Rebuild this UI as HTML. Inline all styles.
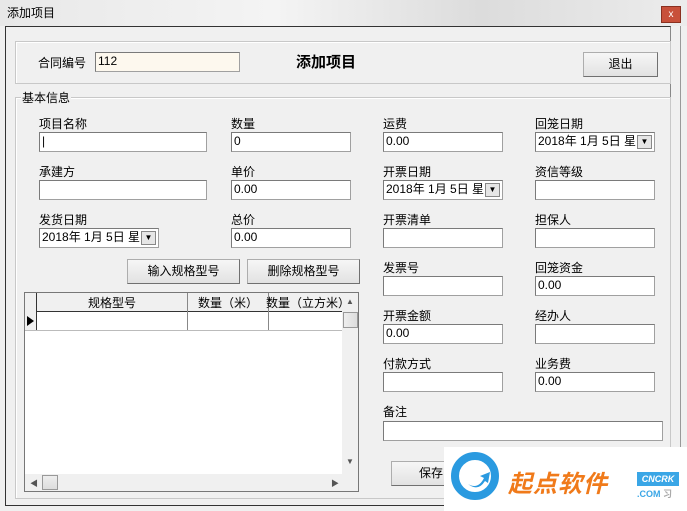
<!DOCTYPE html><html><head><meta charset="utf-8"><style>
*{box-sizing:border-box;margin:0;padding:0}
body{width:687px;height:511px;overflow:hidden;background:#f0f0f0;position:relative;font-family:"Liberation Sans","Noto Sans CJK SC",sans-serif;font-size:12px;color:#000}
.a{position:absolute}
.lbl{position:absolute;font-size:12px;line-height:14px}
.in{position:absolute;height:20px;background:#fff;border:1px solid #a0a0a0;border-top-color:#7a7a7a;border-left-color:#7a7a7a;font-size:12px;line-height:17px;padding-left:2px}
.btn{position:absolute;background:linear-gradient(#f6f6f6,#e2e2e2);border:1px solid #adadad;border-right-color:#707070;border-bottom-color:#707070;text-align:center;font-size:12px}
.grp{position:absolute;border:1px solid #c8c8c8;box-shadow:inset 1px 1px 0 #fff}
.dd{position:absolute;top:2px;right:2px;width:15px;height:14px;background:#e6e6e6;border:1px solid #888;font-size:8px;text-align:center;line-height:12px}
</style></head><body>
<div class="a" style="left:0;top:0;width:687px;height:26px;background:linear-gradient(90deg,#e8e8e8,#f4f4f4 40%,#dcdcdc 70%,#ececec)"></div>
<div class="lbl" style="left:7px;top:6px">添加项目</div>
<div class="a" style="left:661px;top:6px;width:20px;height:17px;background:#c8503a;border:1px solid #8a3020;color:#fff;font-size:10px;text-align:center;line-height:15px">x</div>
<div class="a" style="left:5px;top:26px;width:666px;height:480px;border:1px solid #333;border-right:1px solid #888"></div>
<div class="a" style="left:680px;top:26px;width:1px;height:480px;background:#999"></div>
<div class="grp" style="left:15px;top:41px;width:656px;height:43px"></div>
<div class="lbl" style="left:38px;top:56px">合同编号</div>
<div class="in" style="left:95px;top:52px;width:145px;background:#fdf8ee">112</div>
<div class="a" style="left:296px;top:51px;font-size:15px;font-weight:bold">添加项目</div>
<div class="btn" style="left:583px;top:52px;width:75px;height:25px;line-height:23px">退出</div>
<div class="grp" style="left:15px;top:97px;width:656px;height:402px"></div>
<div class="lbl" style="left:21px;top:91px;background:#f0f0f0;padding:0 1px">基本信息</div>

<div class="lbl" style="left:39px;top:117px">项目名称</div><div class="in" style="left:39px;top:132px;width:168px">|</div>
<div class="lbl" style="left:39px;top:165px">承建方</div><div class="in" style="left:39px;top:180px;width:168px"></div>
<div class="lbl" style="left:39px;top:213px">发货日期</div><div class="in" style="left:39px;top:228px;width:120px">2018年  1月  5日 星<div class="dd">▼</div></div>

<div class="lbl" style="left:231px;top:117px">数量</div><div class="in" style="left:231px;top:132px;width:120px">0</div>
<div class="lbl" style="left:231px;top:165px">单价</div><div class="in" style="left:231px;top:180px;width:120px">0.00</div>
<div class="lbl" style="left:231px;top:213px">总价</div><div class="in" style="left:231px;top:228px;width:120px">0.00</div>

<div class="lbl" style="left:383px;top:117px">运费</div><div class="in" style="left:383px;top:132px;width:120px">0.00</div>
<div class="lbl" style="left:383px;top:165px">开票日期</div><div class="in" style="left:383px;top:180px;width:120px">2018年  1月  5日 星<div class="dd">▼</div></div>
<div class="lbl" style="left:383px;top:213px">开票清单</div><div class="in" style="left:383px;top:228px;width:120px"></div>
<div class="lbl" style="left:383px;top:261px">发票号</div><div class="in" style="left:383px;top:276px;width:120px"></div>
<div class="lbl" style="left:383px;top:309px">开票金额</div><div class="in" style="left:383px;top:324px;width:120px">0.00</div>
<div class="lbl" style="left:383px;top:357px">付款方式</div><div class="in" style="left:383px;top:372px;width:120px"></div>
<div class="lbl" style="left:383px;top:405px">备注</div><div class="in" style="left:383px;top:421px;width:280px"></div>

<div class="lbl" style="left:535px;top:117px">回笼日期</div><div class="in" style="left:535px;top:132px;width:120px">2018年  1月  5日 星<div class="dd">▼</div></div>
<div class="lbl" style="left:535px;top:165px">资信等级</div><div class="in" style="left:535px;top:180px;width:120px"></div>
<div class="lbl" style="left:535px;top:213px">担保人</div><div class="in" style="left:535px;top:228px;width:120px"></div>
<div class="lbl" style="left:535px;top:261px">回笼资金</div><div class="in" style="left:535px;top:276px;width:120px">0.00</div>
<div class="lbl" style="left:535px;top:309px">经办人</div><div class="in" style="left:535px;top:324px;width:120px"></div>
<div class="lbl" style="left:535px;top:357px">业务费</div><div class="in" style="left:535px;top:372px;width:120px">0.00</div>

<div class="btn" style="left:127px;top:259px;width:113px;height:25px;line-height:23px">输入规格型号</div>
<div class="btn" style="left:247px;top:259px;width:113px;height:25px;line-height:23px">删除规格型号</div>

<div class="a" style="left:24px;top:292px;width:335px;height:200px;background:#fff;border:1px solid #777;overflow:hidden">
<div class="a" style="left:0;top:0;width:333px;height:19px;background:#f0f0f0;border-bottom:1px solid #333"></div>
<div class="a" style="left:11px;top:0;width:1px;height:37px;background:#333"></div>
<div class="a" style="left:0;top:0;width:11px;height:37px;background:#f0f0f0"></div>
<div class="a" style="left:2px;top:23px;width:0;height:0;border-left:7px solid #000;border-top:5px solid transparent;border-bottom:5px solid transparent"></div>
<div class="a" style="left:162px;top:0;width:1px;height:37px;background:#888"></div>
<div class="a" style="left:243px;top:0;width:1px;height:37px;background:#888"></div>
<div class="a" style="left:0;top:37px;width:317px;height:1px;background:#bbb"></div>
<div class="lbl" style="left:63px;top:3px">规格型号</div>
<div class="lbl" style="left:173px;top:3px">数量（米）</div>
<div class="lbl" style="left:241px;top:3px">数量（立方米）</div>
<div class="a" style="left:317px;top:0;width:17px;height:181px;background:#f0f0f0"></div>
<div class="lbl" style="left:321px;top:2px;font-size:8px;color:#555">▲</div>
<div class="a" style="left:318px;top:19px;width:15px;height:16px;background:linear-gradient(90deg,#eee,#ddd);border:1px solid #999"></div>
<div class="lbl" style="left:321px;top:162px;font-size:8px;color:#555">▼</div>
<div class="a" style="left:0;top:181px;width:334px;height:18px;background:#f0f0f0"></div>
<div class="lbl" style="left:5px;top:184px;font-size:8px;color:#555">◀</div>
<div class="a" style="left:17px;top:182px;width:16px;height:15px;background:linear-gradient(#eee,#ddd);border:1px solid #999"></div>
<div class="lbl" style="left:306px;top:184px;font-size:8px;color:#555">▶</div>
</div>

<div class="btn" style="left:391px;top:461px;width:80px;height:25px;line-height:23px">保存</div>

<div class="a" style="left:444px;top:447px;width:243px;height:64px;background:#fff"></div>
<svg class="a" style="left:450px;top:450px" width="50" height="52" viewBox="0 0 50 52"><circle cx="25" cy="26" r="20" fill="none" stroke="#2a9ae0" stroke-width="8"/><path d="M18 34 Q28 40 34 28 L30 26 L40 22 L38 33 L35 31 Q28 42 18 34Z" fill="#2a9ae0"/></svg>
<div class="a" style="left:508px;top:464px;font-size:24px;font-weight:bold;font-style:italic;color:#f07a1a;letter-spacing:1px">起点软件</div>
<div class="a" style="left:637px;top:472px;width:42px;height:14px;background:#3aa6e6;color:#fff;font-size:9px;font-weight:bold;font-style:italic;text-align:center;line-height:14px">CNCRK</div>
<div class="a" style="left:637px;top:487px;font-size:9px;font-weight:bold;color:#3aa6e6">.COM <span style="color:#aaa">习</span></div>
</body></html>
